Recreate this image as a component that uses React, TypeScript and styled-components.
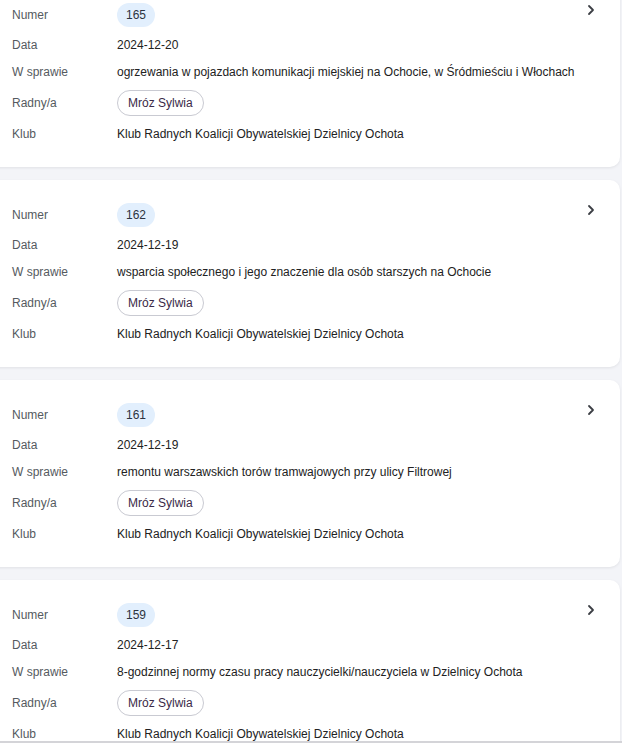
import React from 'react';
import styled, {createGlobalStyle} from 'styled-components';

const GlobalStyle = createGlobalStyle`
  html, body {
    margin: 0;
    padding: 0;
    background: #f3f4f8;
    font-family: "Liberation Sans", Arial, sans-serif;
  }
`

const Frame = styled.div`
  height: 741px;
  overflow: hidden;
  border-bottom: 2px solid #d4d4d8;
  background: #f3f4f8;
`

const List = styled.div`
  display: flex;
  flex-direction: column;
  gap: 13px;
  margin-top: -20px;
  margin-left: -12px;
  margin-right: 2px;
`

const Card = styled.div`
  position: relative;
  background: #ffffff;
  border-radius: 10px;
  box-shadow: 0 1px 3px rgba(0, 0, 0, 0.08);
  padding: 23px 40px 24px 24px;
`

const Grid = styled.div`
  display: grid;
  grid-template-columns: 105px 1fr;
  row-gap: 9px;
  align-items: center;
  font-size: 12px;
  line-height: 18px;
`

const Label = styled.div`
  color: #555a60;
`

const Value = styled.div`
  color: #222;
  white-space: nowrap;
`

const NumberBadge = styled.span`
  display: inline-flex;
  align-items: center;
  justify-content: center;
  width: 38px;
  height: 24px;
  border-radius: 12px;
  background: #e2effd;
  color: #2c3340;
`

const PersonChip = styled.span`
  display: inline-flex;
  align-items: center;
  height: 24px;
  padding: 0 10px;
  border: 1px solid #c9cad2;
  border-radius: 13px;
  color: #3a2a48;
`

const Chevron = styled.svg`
  position: absolute;
  top: 24px;
  right: 24px;
  width: 10px;
  height: 12px;
`

type Item = {
    numer: string;
    data: string;
    sprawa: string;
};

const items: Item[] = [
    {numer: '165', data: '2024-12-20', sprawa: 'ogrzewania w pojazdach komunikacji miejskiej na Ochocie, w Śródmieściu i Włochach'},
    {numer: '162', data: '2024-12-19', sprawa: 'wsparcia społecznego i jego znaczenie dla osób starszych na Ochocie'},
    {numer: '161', data: '2024-12-19', sprawa: 'remontu warszawskich torów tramwajowych przy ulicy Filtrowej'},
    {numer: '159', data: '2024-12-17', sprawa: '8-godzinnej normy czasu pracy nauczycielki/nauczyciela w Dzielnicy Ochota'},
];

function App() {
    return (
        <Frame>
            <GlobalStyle/>
            <List>
                {items.map(item => (
                    <Card key={item.numer}>
                        <Chevron viewBox="0 0 10 12">
                            <path d="M3 2 L7 6 L3 10" fill="none" stroke="#3c3f44" strokeWidth="1.8" strokeLinecap="round" strokeLinejoin="round"/>
                        </Chevron>
                        <Grid>
                            <Label>Numer</Label>
                            <Value><NumberBadge>{item.numer}</NumberBadge></Value>
                            <Label>Data</Label>
                            <Value>{item.data}</Value>
                            <Label>W sprawie</Label>
                            <Value>{item.sprawa}</Value>
                            <Label>Radny/a</Label>
                            <Value><PersonChip>Mróz Sylwia</PersonChip></Value>
                            <Label>Klub</Label>
                            <Value>Klub Radnych Koalicji Obywatelskiej Dzielnicy Ochota</Value>
                        </Grid>
                    </Card>
                ))}
            </List>
        </Frame>
    );
}

export default App;
